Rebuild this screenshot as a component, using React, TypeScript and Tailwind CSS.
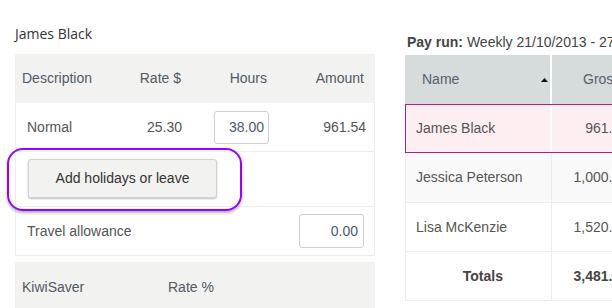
import React from "react";

const arial = { fontFamily: '"Liberation Sans", Arial, sans-serif' };

export default function App() {
  return (
    <div
      className="w-[612px] h-[308px] overflow-hidden bg-white flex text-[14px] text-[#555]"
      style={arial}
    >
      {/* Left panel */}
      <div className="ml-[15px] w-[360px] shrink-0 pt-[24px]">
        <div
          className="h-[20px] leading-[20px] text-[14px] text-[#333] mb-[10px]"
          style={{ fontFamily: '"Open Sans", sans-serif' }}
        >
          James Black
        </div>
        <div className="grid grid-cols-[116px_60px_86px_98px] h-[49px] items-center bg-[#f2f2f0] text-[#4f5b66]">
          <div className="pl-[7px]">Description</div>
          <div className="text-right pr-[10px]">Rate $</div>
          <div className="text-right pr-[10px]">Hours</div>
          <div className="text-right pr-[11px]">Amount</div>
        </div>
        <div className="grid grid-cols-[116px_60px_86px_98px] h-[49px] items-center border-x border-b border-[#ececec]">
          <div className="pl-[11px]">Normal</div>
          <div className="text-right pr-[10px]">25.30</div>
          <div className="flex justify-end pr-[9px]">
            <div className="w-[55px] h-[33px] border border-[#cfcfcf] rounded-[3px] flex items-center justify-end pr-[4px] text-[#4a5a70]">
              38.00
            </div>
          </div>
          <div className="text-right pr-[10px]">961.54</div>
        </div>
        <div className="relative h-[55px] border-x border-b border-[#ececec] pl-[12px] pt-[7px]">
          <div className="w-[189px] h-[39px] bg-[#f2f2f0] border border-[#d2d2d2] rounded-[3px] shadow-[0_1px_2px_rgba(0,0,0,0.25)] flex items-center justify-center text-[#333]">
            Add holidays or leave
          </div>
          <div className="absolute left-[-9px] top-[-4px] w-[235px] h-[63px] rounded-[16px] border-2 border-[#9a00ff] shadow-[0_2px_3px_rgba(0,0,0,0.3)] z-10" />
        </div>
        <div className="flex h-[49px] items-center justify-between border-x border-b border-[#ececec]">
          <div className="pl-[11px]">Travel allowance</div>
          <div className="mr-[10px] w-[65px] h-[34px] border border-[#cfcfcf] rounded-[3px] flex items-center justify-end pr-[5px] text-[#4a5a70]">
            0.00
          </div>
        </div>
        <div className="mt-[6px] h-[60px] bg-[#f2f2f0] flex pt-[15px] text-[#4f5b66]">
          <div className="pl-[7px] w-[153px] leading-[20px]">KiwiSaver</div>
          <div className="leading-[20px]">Rate %</div>
        </div>
      </div>

      {/* Right panel */}
      <div className="ml-[30px] shrink-0 pt-[32px]">
        <div className="h-[20px] leading-[20px] pl-[2px] whitespace-nowrap text-[#444]">
          <span className="font-bold">Pay run:</span> Weekly 21/10/2013 - 27/10/2013
        </div>
        <div className="mt-[3px] w-[240px]">
          <div className="flex h-[49px] bg-[#d6dbdb] text-[#556270]">
            <div className="w-[147px] relative flex items-center pl-[17px] border-r-2 border-white">
              Name
              <svg className="absolute left-[136px] top-[23px]" width="7" height="4" viewBox="0 0 7 4">
                <path d="M0 4 L3.5 0 L7 4 Z" fill="#111" />
              </svg>
            </div>
            <div className="flex-1 flex items-center pl-[31px]">Gross</div>
          </div>
          <div className="flex h-[49px] bg-[#fdeef1] border-y-[1.5px] border-l-[1.5px] border-[#b3207c]">
            <div className="w-[146px] flex items-center pl-[10px] border-r-2 border-white">James Black</div>
            <div className="w-[84px] flex items-center justify-end pr-[8px]">961.54</div>
          </div>
          <div className="flex h-[50px] bg-[#f9f9f9] border-l border-b border-[#ececec]">
            <div className="w-[146px] flex items-center pl-[10px] border-r border-[#ececec]">Jessica Peterson</div>
            <div className="w-[84px] flex items-center justify-end pr-[8px]">1,000.00</div>
          </div>
          <div className="flex h-[49px] bg-white border-l border-b border-[#ececec]">
            <div className="w-[146px] flex items-center pl-[10px] border-r border-[#ececec]">Lisa McKenzie</div>
            <div className="w-[84px] flex items-center justify-end pr-[8px]">1,520.00</div>
          </div>
          <div className="flex h-[49px] bg-white border-l border-b border-[#ececec] font-bold text-[#444]">
            <div className="w-[146px] flex items-center justify-end pr-[48px] border-r border-[#ececec]">Totals</div>
            <div className="w-[84px] flex items-center justify-end pr-[8px]">3,481.54</div>
          </div>
        </div>
      </div>
    </div>
  );
}
